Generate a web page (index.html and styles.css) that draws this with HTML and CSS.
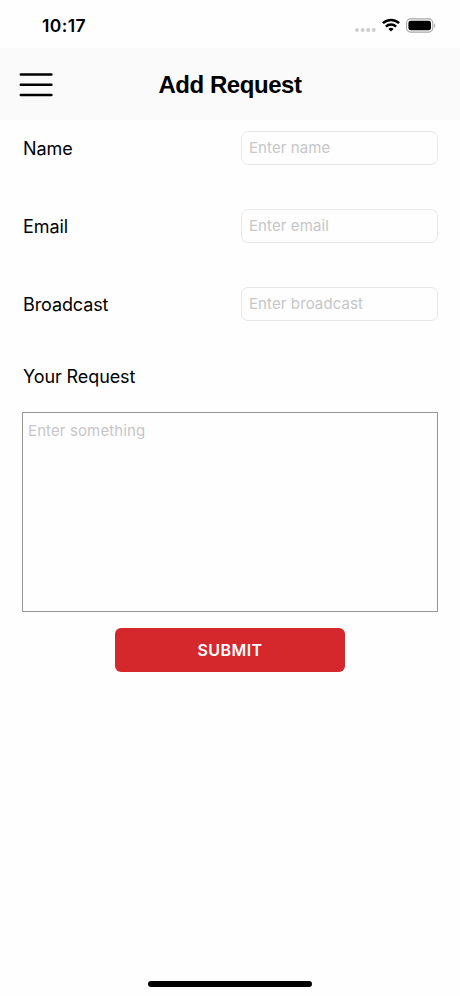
FILE: index.html
```
<!DOCTYPE html>
<html lang="en">
<head>
  <meta charset="UTF-8">
  <meta name="viewport" content="width=device-width, initial-scale=1.0">
  <title>Add Request</title>
  <link rel="stylesheet" href="styles.css">
</head>
<body>

<div class="screen">
  <div class="status-bar">
    <span class="time">10:17</span>
    <div class="status-icons">
      <svg class="signal" width="21" height="4" viewBox="0 0 21 4" fill="#cbcbcb">
        <circle cx="2" cy="2" r="1.9"/>
        <circle cx="7.6" cy="2" r="1.9"/>
        <circle cx="13.2" cy="2" r="1.9"/>
        <circle cx="18.8" cy="2" r="1.9"/>
      </svg>
      <svg class="wifi" width="18" height="14" viewBox="0 0 18 14" fill="none" stroke="#000" stroke-width="2.5">
        <path d="M0.9 5.2a11.6 11.6 0 0 1 16.2 0"/>
        <path d="M3.9 8.7a7.3 7.3 0 0 1 10.2 0"/>
        <path d="M9 13.6l-2.6-2.5a3.7 3.7 0 0 1 5.2 0z" fill="#000" stroke="none"/>
      </svg>
      <svg class="battery" width="30" height="15" viewBox="0 0 30 15">
        <rect x="0.6" y="0.9" width="26.2" height="13.2" rx="4" fill="none" stroke="#a6a6a6" stroke-width="1.1"/>
        <rect x="2.4" y="2.7" width="22.6" height="9.6" rx="2.4" fill="#000"/>
        <path d="M28.1 5.2v4.6c1.6-.7 1.6-3.9 0-4.6z" fill="#a6a6a6"/>
      </svg>
    </div>
  </div>

  <header class="header">
    <button type="button" class="menu-btn" aria-label="Menu">
      <svg width="34" height="24" viewBox="0 0 34 24" stroke="#000" stroke-width="2.5" stroke-linecap="round">
        <path d="M1.8 1.6h30.6M1.8 11.8h30.6M1.8 22.1h30.6"/>
      </svg>
    </button>
    <h1>Add Request</h1>
  </header>

  <form class="request-form">
    <div class="row">
      <label for="name">Name</label>
      <input type="text" id="name" placeholder="Enter name">
    </div>
    <div class="row">
      <label for="email">Email</label>
      <input type="text" id="email" placeholder="Enter email">
    </div>
    <div class="row">
      <label for="broadcast">Broadcast</label>
      <input type="text" id="broadcast" placeholder="Enter broadcast">
    </div>

    <label class="request-label" for="request">Your Request</label>
    <textarea id="request" placeholder="Enter something"></textarea>

    <button type="submit" class="submit-btn">SUBMIT</button>
  </form>

  <div class="home-indicator"></div>
</div>

</body>
</html>
```
FILE: styles.css
```
* {
  box-sizing: border-box;
}
body {
  margin: 0;
  background: #fefefe;
  color: #000;
  font-family: Inter, "Liberation Sans", sans-serif;
}
.screen {
  display: flex;
  flex-direction: column;
  height: 996px;
}
.status-bar {
  display: flex;
  justify-content: space-between;
  align-items: center;
  height: 48px;
  padding: 3px 24px 0 42px;
}
.time {
  font-size: 17.5px;
  font-weight: 600;
  letter-spacing: 0.4px;
}
.status-icons {
  display: flex;
  align-items: center;
  gap: 6px;
}
.signal {
  margin-top: 9px;
}
.wifi {
  margin-top: -2px;
}
.battery {
  margin-top: -1px;
}
.header {
  display: grid;
  grid-template-columns: 34px 1fr 34px;
  align-items: center;
  height: 72px;
  padding: 2px 19px 0;
  background: #fafafa;
}
.menu-btn {
  display: flex;
  padding: 0;
  border: none;
  background: none;
}
h1 {
  margin: 0;
  font-family: "Liberation Sans", Arial, sans-serif;
  font-size: 24px;
  font-weight: 700;
  letter-spacing: -0.45px;
  text-align: center;
}
.request-form {
  display: flex;
  flex-direction: column;
  padding: 11px 22px 0;
}
.row {
  display: flex;
  justify-content: space-between;
  align-items: center;
  height: 34px;
  margin-bottom: 44px;
}
label {
  padding-left: 1px;
  font-size: 18px;
  line-height: 24px;
  letter-spacing: -0.1px;
}
.row label {
  padding-top: 2px;
}
input {
  width: 197px;
  height: 34px;
  padding: 0 7px 2px;
  border: 1px solid #e8e8e8;
  border-radius: 7px;
  background: #fefefe;
  font-family: inherit;
  font-size: 15px;
  letter-spacing: 0.1px;
}
input::placeholder,
textarea::placeholder {
  color: #c6c6c8;
}
.request-label {
  margin-bottom: 23px;
}
textarea {
  height: 200px;
  padding: 8px 5px;
  border: 1px solid #969696;
  border-radius: 0;
  background: #fefefe;
  font-family: inherit;
  font-size: 15px;
  letter-spacing: 0.12px;
  resize: none;
}
.submit-btn {
  align-self: center;
  width: 230px;
  height: 44px;
  margin-top: 16px;
  border: none;
  border-radius: 6px;
  background: #d5282c;
  color: #fff;
  font-family: inherit;
  font-size: 16px;
  font-weight: 600;
  letter-spacing: 0.4px;
}
.home-indicator {
  align-self: center;
  width: 164px;
  height: 6px;
  margin: auto 0 9px;
  border-radius: 3px;
  background: #000;
}
```
